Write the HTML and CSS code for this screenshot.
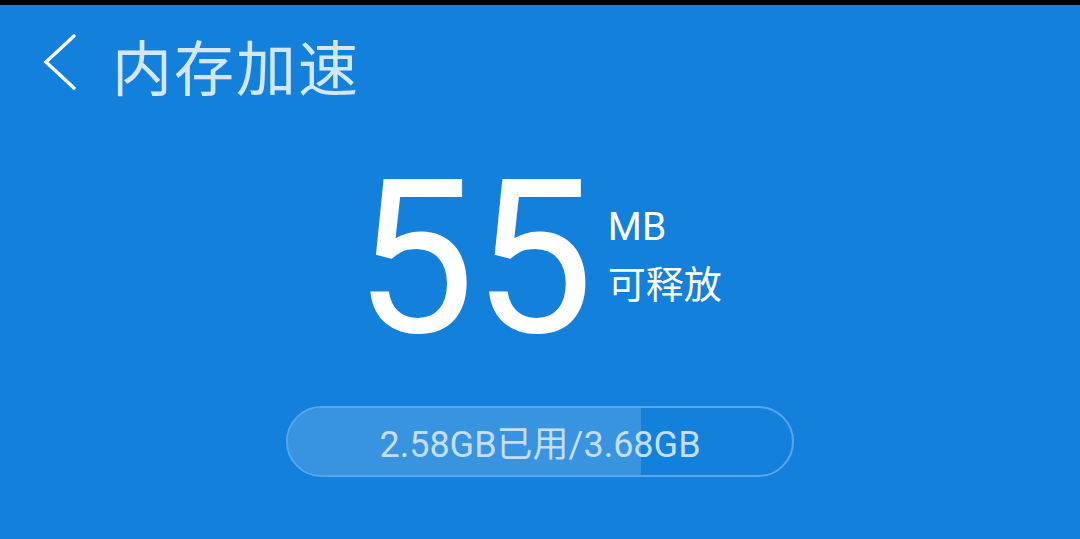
FILE: index.html
```html
<!DOCTYPE html>
<html lang="zh">
<head>
<meta charset="utf-8">
<link rel="stylesheet" href="styles.css">
</head>
<body>
<div class="status"></div>
<div class="app">
  <header class="header">
    <svg class="back" width="34" height="58" viewBox="0 0 34 58"><polyline points="31,3 3,29 31,55" fill="none" stroke="#ffffff" stroke-width="3.4" stroke-linecap="round" stroke-linejoin="miter"/></svg>
    <h1 class="title">内存加速</h1>
  </header>
  <main class="main">
    <div class="amount">
      <div class="num">55</div>
      <div class="side">
        <div class="unit">MB</div>
        <div class="label">可释放</div>
      </div>
    </div>
    <div class="pill">
      <div class="fill" style="width:70.1%"></div>
      <div class="pill-text">2.58GB已用/3.68GB</div>
    </div>
  </main>
</div>
</body>
</html>
```
FILE: styles.css
```css
html, body {
  margin: 0;
  padding: 0;
}
body {
  width: 1080px;
  height: 539px;
  overflow: hidden;
  background: #1380dc;
  font-family: Roboto, "Noto Sans CJK SC", sans-serif;
}
.status {
  height: 5px;
  background: #000;
}
.app {
  display: flex;
  flex-direction: column;
}
.header {
  display: flex;
  align-items: center;
  height: 130px;
  margin-top: -5px;
  padding-left: 43px;
}
.back {
  display: block;
  margin-top: -6px;
}
.title {
  margin: 0 0 0 35px;
  font-weight: 400;
  font-size: 60px;
  line-height: 1;
  color: #d2e7f8;
  font-family: "Noto Sans CJK SC", sans-serif;
  letter-spacing: 2px;
}
.main {
  display: flex;
  flex-direction: column;
  align-items: center;
}
.amount {
  display: flex;
  align-items: flex-start;
  margin-top: 21px;
  margin-right: 4px;
}
.num {
  font-size: 215px;
  line-height: 1;
  color: #fff;
  letter-spacing: -2px;
}
.side {
  display: flex;
  flex-direction: column;
  margin-left: 16px;
  padding-top: 54px;
  color: #fff;
}
.unit {
  font-size: 39px;
  line-height: 44px;
}
.label {
  margin-top: 11px;
  font-size: 38px;
  line-height: 44px;
  font-family: "Noto Sans CJK SC", sans-serif;
}
.pill {
  position: relative;
  margin-top: 40px;
  width: 508px;
  height: 71px;
  box-sizing: border-box;
  border: 2px solid rgba(255, 255, 255, 0.3);
  border-radius: 36px;
  overflow: hidden;
  display: flex;
  align-items: center;
  justify-content: center;
}
.fill {
  position: absolute;
  left: 0;
  top: 0;
  bottom: 0;
  background: rgba(255, 255, 255, 0.16);
}
.pill-text {
  position: relative;
  font-size: 36px;
  color: #c5def5;
  margin-top: -1px;
}
```
